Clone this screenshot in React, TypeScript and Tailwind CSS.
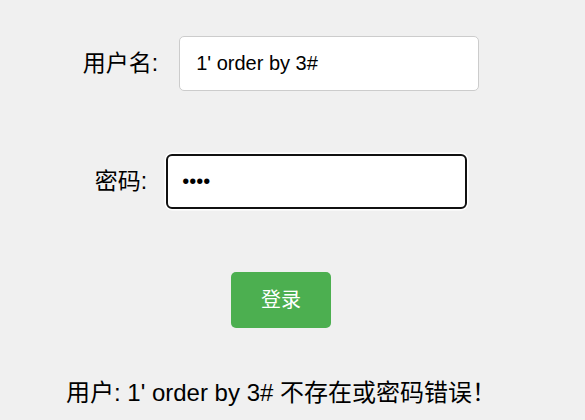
const font = {
  fontFamily: '"Liberation Sans", "Noto Sans CJK SC", sans-serif',
};

export default function App() {
  return (
    <div
      className="min-h-[420px] w-full bg-[#f0f0f0] text-black"
      style={font}
    >
      <div className="flex w-[562px] flex-col items-center pt-[36px]">
        {/* 用户名 */}
        <div className="flex items-center gap-[21px]">
          <label className="text-[23px] leading-none">用户名:</label>
          <input
            type="text"
            readOnly
            value="1' order by 3#"
            className="h-[55px] w-[300px] rounded-[5px] border border-[#cccccc] bg-white px-[16px] text-[20px] outline-none"
          />
        </div>

        {/* 密码 */}
        <div className="mt-[63px] flex items-center gap-[19px]">
          <label className="text-[23px] leading-none">密码:</label>
          <input
            type="password"
            readOnly
            value="1234"
            className="h-[55px] w-[301px] rounded-[6px] border-[2.5px] border-[#111111] bg-white px-[14px] text-[20px] shadow-[0_0_0_1.5px_#ffffff] outline-none"
          />
        </div>

        <button className="mt-[63px] h-[56px] w-[100px] rounded-[5px] bg-[#4caf50] text-[20px] text-white">
          登录
        </button>

        <p className="mt-[47px] text-[24px] leading-[36px]">
          用户: 1' order by 3# 不存在或密码错误！
        </p>
      </div>
    </div>
  );
}
